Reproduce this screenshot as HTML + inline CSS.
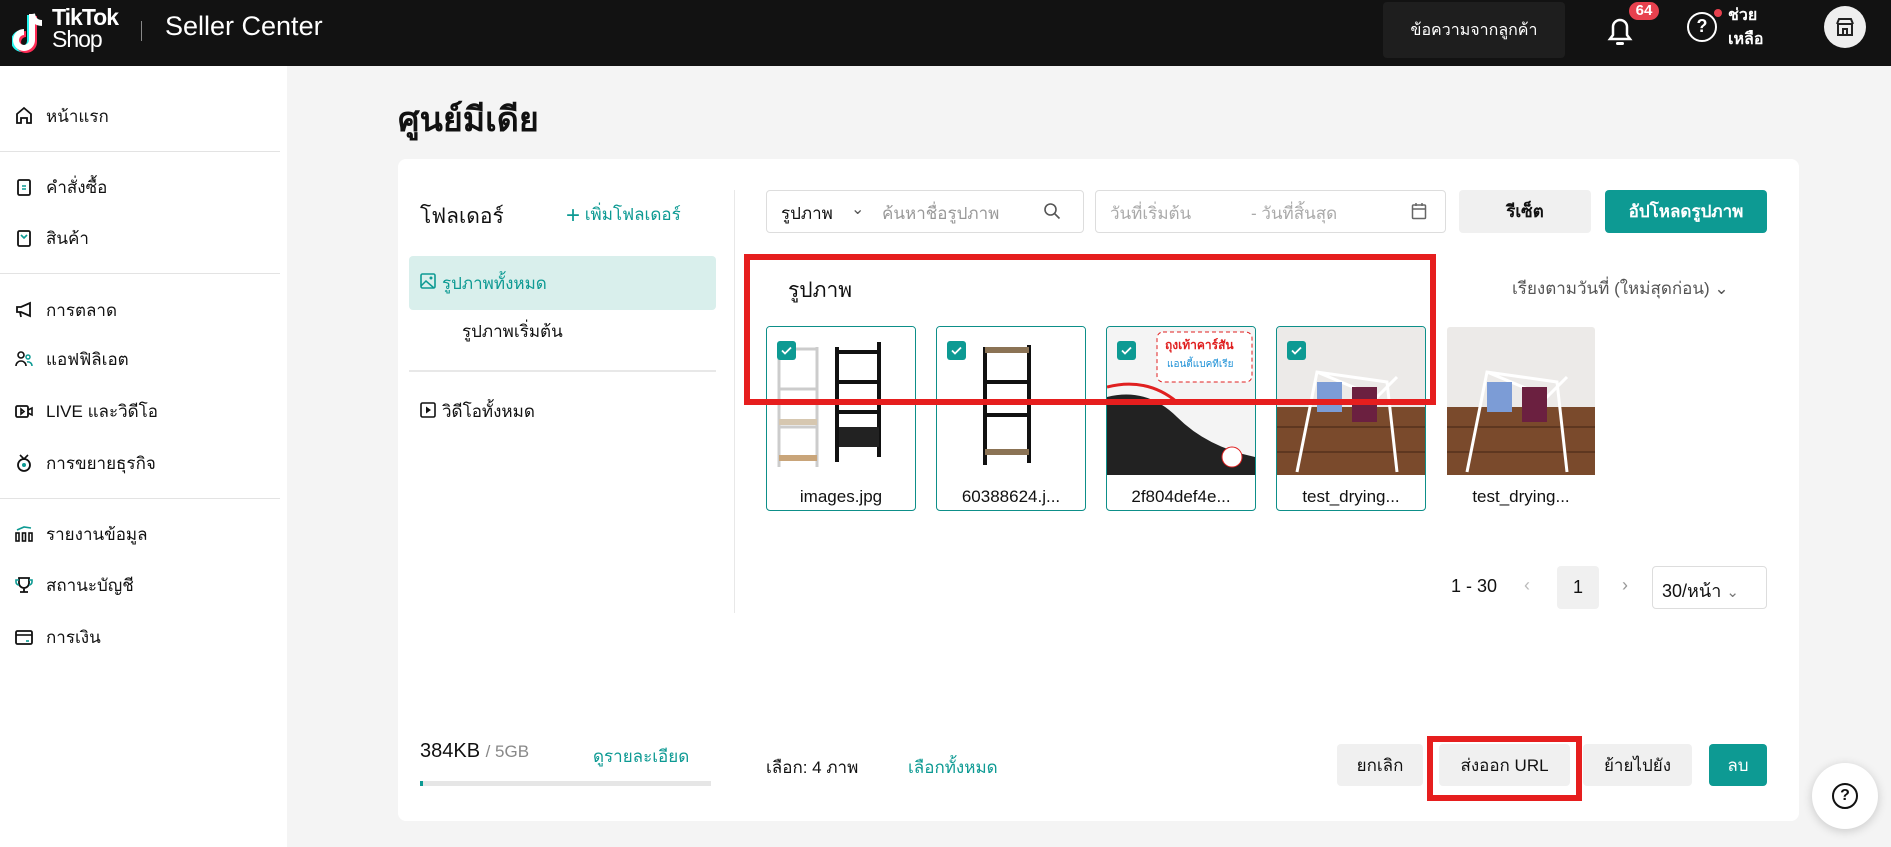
<!DOCTYPE html>
<html><head><meta charset="utf-8">
<style>
*{box-sizing:border-box;margin:0;padding:0}
body{width:1891px;height:847px;overflow:hidden;background:#f4f4f4;font-family:"Liberation Sans","DejaVu Sans",sans-serif;color:#111;position:relative}
.a{position:absolute}
.hdr{left:0;top:0;width:1891px;height:66px;background:#121212}
.side{left:0;top:66px;width:287px;height:781px;background:#fff}
.nav{position:absolute;left:14px;font-size:17px;display:flex;align-items:center;gap:12px;height:24px}
.nav svg{width:20px;height:20px}
.hr{position:absolute;left:0;width:280px;height:1px;background:#e3e3e3}
.card{left:398px;top:159px;width:1401px;height:662px;background:#fff;border-radius:8px}
.btn{position:absolute;display:flex;align-items:center;justify-content:center;border-radius:4px;font-size:17px}
.th{position:absolute;top:326px;width:150px;height:185px;border:1px solid #0d8f89;border-radius:4px;overflow:hidden;background:#fff}
.th .img{position:absolute;left:0;top:0;width:148px;height:148px}
.th .nm{position:absolute;left:0;top:160px;width:100%;text-align:center;font-size:17px}
.ck{position:absolute;left:10px;top:14px;width:19px;height:19px;background:#0d9a93;border-radius:3px}
.teal{color:#0d9a93}
</style></head><body>
<div class="a hdr"></div>
<svg class="a" style="left:12px;top:10px" width="40" height="46" viewBox="0 0 40 46">
<path d="M20 4v26a8 8 0 1 1-8-8" fill="none" stroke="#25f4ee" stroke-width="6" transform="translate(-2,1)"/>
<path d="M20 4v26a8 8 0 1 1-8-8" fill="none" stroke="#fe2c55" stroke-width="6" transform="translate(2,2)"/>
<path d="M20 4v26a8 8 0 1 1-8-8M20 4c1 6 5 9 10 9" fill="none" stroke="#fff" stroke-width="6"/>
</svg>
<div class="a" style="left:52px;top:6px;color:#fff;font-size:23px;font-weight:bold;line-height:22px;letter-spacing:-1px">TikTok<br><span style="font-weight:normal">Shop</span></div>
<div class="a" style="left:141px;top:21px;width:1px;height:20px;background:#888"></div>
<div class="a" style="left:165px;top:11px;color:#fff;font-size:27px;">Seller Center</div>
<div class="a btn" style="left:1383px;top:2px;width:182px;height:56px;background:#1e1e1e;color:#fff;font-size:16px">ข้อความจากลูกค้า</div>
<svg class="a" style="left:1606px;top:14px" width="28" height="34" viewBox="0 0 28 34"><path d="M4 25h20l-3-4V13a7 7 0 0 0-14 0v8z" fill="none" stroke="#fff" stroke-width="2.5"/><rect x="10" y="28" width="8" height="3" rx="1.5" fill="#fff"/></svg>
<div class="a" style="left:1627px;top:0;width:34px;height:22px;background:#e8414e;border:2px solid #121212;border-radius:11px;color:#fff;font-size:15px;font-weight:bold;text-align:center;line-height:18px">64</div>
<div class="a" style="left:1687px;top:12px;width:30px;height:30px;border:2.5px solid #fff;border-radius:50%;color:#fff;font-weight:bold;font-size:18px;text-align:center;line-height:25px">?</div>
<div class="a" style="left:1714px;top:9px;width:8px;height:8px;background:#e8414e;border-radius:50%"></div>
<div class="a" style="left:1728px;top:4px;color:#fff;font-size:16px;font-weight:bold;line-height:24px">ช่วย<br>เหลือ</div>
<div class="a" style="left:1824px;top:6px;width:42px;height:42px;background:#eee;border-radius:50%"></div>
<svg class="a" style="left:1834px;top:16px" width="22" height="22" viewBox="0 0 22 22"><path d="M3 8l2-5h12l2 5M4 8v11h14V8M9 19v-6h4v6M3 8h16" fill="none" stroke="#222" stroke-width="2"/></svg>

<div class="a side"></div>
<div class="nav" style="top:104px"><svg viewBox="0 0 20 20"><path d="M3 17V8l7-6 7 6v9h-4v-5H7v5z" fill="none" stroke="#111" stroke-width="1.8"/></svg>หน้าแรก</div>
<div class="hr" style="top:151px"></div>
<div class="nav" style="top:175px"><svg viewBox="0 0 20 20"><rect x="4" y="3" width="12" height="15" rx="1.5" fill="none" stroke="#111" stroke-width="1.8"/><path d="M8 9h4M8 12h4" stroke="#0d9a93" stroke-width="1.6"/></svg>คำสั่งซื้อ</div>
<div class="nav" style="top:226px"><svg viewBox="0 0 20 20"><rect x="4" y="3" width="12" height="15" rx="1.5" fill="none" stroke="#111" stroke-width="1.8"/><path d="M7 7l3 3 3-3" fill="none" stroke="#0d9a93" stroke-width="1.6"/></svg>สินค้า</div>
<div class="hr" style="top:273px"></div>
<div class="nav" style="top:298px"><svg viewBox="0 0 20 20"><path d="M3 7h4l9-4v13l-9-4H3zM6 12l1 5" fill="none" stroke="#111" stroke-width="1.8"/></svg>การตลาด</div>
<div class="nav" style="top:347px"><svg viewBox="0 0 20 20"><circle cx="7" cy="6" r="3" fill="none" stroke="#111" stroke-width="1.6"/><path d="M2 17a5 5 0 0 1 10 0" fill="none" stroke="#111" stroke-width="1.6"/><circle cx="14" cy="8" r="2" fill="none" stroke="#0d9a93" stroke-width="1.5"/><path d="M13 13a4 4 0 0 1 5 4" fill="none" stroke="#0d9a93" stroke-width="1.5"/></svg>แอฟฟิลิเอต</div>
<div class="nav" style="top:399px"><svg viewBox="0 0 20 20"><rect x="2" y="5" width="12" height="11" rx="1.5" fill="none" stroke="#111" stroke-width="1.8"/><path d="M14 9l4-2v7l-4-2M7 8v5l3-2.5z" fill="none" stroke="#111" stroke-width="1.6"/></svg>LIVE และวิดีโอ</div>
<div class="nav" style="top:451px"><svg viewBox="0 0 20 20"><circle cx="10" cy="12" r="6" fill="none" stroke="#111" stroke-width="1.8"/><circle cx="10" cy="12" r="2" fill="#0d9a93"/><path d="M6 2l4 4 4-4" fill="none" stroke="#111" stroke-width="1.6"/></svg>การขยายธุรกิจ</div>
<div class="hr" style="top:498px"></div>
<div class="nav" style="top:522px"><svg viewBox="0 0 20 20"><rect x="2" y="9" width="3" height="8" fill="none" stroke="#111" stroke-width="1.6"/><rect x="8.5" y="9" width="3" height="8" fill="none" stroke="#111" stroke-width="1.6"/><rect x="15" y="9" width="3" height="8" fill="none" stroke="#111" stroke-width="1.6"/><path d="M3 6l7-3 7 1" fill="none" stroke="#0d9a93" stroke-width="1.6"/></svg>รายงานข้อมูล</div>
<div class="nav" style="top:573px"><svg viewBox="0 0 20 20"><path d="M5 3h10v5a5 5 0 0 1-10 0zM10 13v4M6 17h8" fill="none" stroke="#111" stroke-width="1.8"/><path d="M5 5H2v2a3 3 0 0 0 3 3M15 5h3v2a3 3 0 0 1-3 3" fill="none" stroke="#0d9a93" stroke-width="1.6"/></svg>สถานะบัญชี</div>
<div class="nav" style="top:625px"><svg viewBox="0 0 20 20"><rect x="2" y="4" width="16" height="13" rx="1.5" fill="none" stroke="#111" stroke-width="1.8"/><path d="M2 8h16" stroke="#111" stroke-width="1.6"/><path d="M12 14h3" stroke="#0d9a93" stroke-width="1.6"/></svg>การเงิน</div>

<div class="a" style="left:398px;top:92px;font-size:34px;font-weight:bold">ศูนย์มีเดีย</div>
<div class="a card"></div>
<div class="a" style="left:420px;top:200px;font-size:21px">โฟลเดอร์</div>
<div class="a teal" style="left:566px;top:201px;font-size:17px"><span style="font-size:24px;vertical-align:-3px">+</span> เพิ่มโฟลเดอร์</div>
<div class="a" style="left:409px;top:256px;width:307px;height:54px;background:#d9efec;border-radius:4px"></div>
<svg class="a" style="left:420px;top:273px" width="16" height="16" viewBox="0 0 16 16"><rect x="1" y="1" width="14" height="14" rx="1.5" fill="none" stroke="#0d9a93" stroke-width="1.6"/><path d="M1 13l5-5 8 7" fill="none" stroke="#0d9a93" stroke-width="1.5"/><circle cx="11" cy="5" r="1.5" fill="#0d9a93"/></svg>
<div class="a teal" style="left:442px;top:270px;font-size:17px">รูปภาพทั้งหมด</div>
<div class="a" style="left:462px;top:318px;font-size:17px">รูปภาพเริ่มต้น</div>
<div class="a" style="left:409px;top:370px;width:307px;height:2px;background:#e8e8e8"></div>
<svg class="a" style="left:420px;top:402px" width="16" height="16" viewBox="0 0 16 16"><rect x="1" y="1" width="14" height="14" rx="1.5" fill="none" stroke="#111" stroke-width="1.6"/><path d="M6 4.5v7l5-3.5z" fill="#111"/></svg>
<div class="a" style="left:442px;top:398px;font-size:17px">วิดีโอทั้งหมด</div>
<div class="a" style="left:734px;top:190px;width:1px;height:423px;background:#e8e8e8"></div>
<div class="a" style="left:420px;top:740px;font-size:20px">384KB <span style="color:#888;font-size:17px">/ 5GB</span></div>
<div class="a teal" style="left:593px;top:743px;font-size:17px">ดูรายละเอียด</div>
<div class="a" style="left:420px;top:781px;width:291px;height:5px;background:#e6e6e6"></div>
<div class="a" style="left:420px;top:781px;width:3px;height:5px;background:#0d9a93"></div>

<div class="a" style="left:766px;top:190px;width:318px;height:43px;border:1px solid #ddd;border-radius:4px"></div>
<div class="a" style="left:781px;top:200px;font-size:17px">รูปภาพ</div>
<div class="a" style="left:851px;top:199px;font-size:16px;color:#555">&#8964;</div>
<div class="a" style="left:882px;top:200px;font-size:17px;color:#999">ค้นหาชื่อรูปภาพ</div>
<svg class="a" style="left:1043px;top:202px" width="18" height="18" viewBox="0 0 18 18"><circle cx="7.5" cy="7.5" r="5.5" fill="none" stroke="#555" stroke-width="1.6"/><path d="M11.5 11.5l5 5" stroke="#555" stroke-width="1.6"/></svg>
<div class="a" style="left:1095px;top:190px;width:351px;height:43px;border:1px solid #ddd;border-radius:4px"></div>
<div class="a" style="left:1110px;top:200px;font-size:17px;color:#aaa">วันที่เริ่มต้น</div>
<div class="a" style="left:1251px;top:200px;font-size:17px;color:#aaa">- วันที่สิ้นสุด</div>
<svg class="a" style="left:1411px;top:202px" width="16" height="18" viewBox="0 0 16 18"><rect x="1.5" y="3" width="13" height="13.5" rx="1" fill="none" stroke="#666" stroke-width="1.5"/><path d="M1.5 7h13M5 1v3M11 1v3" stroke="#666" stroke-width="1.5"/></svg>
<div class="btn" style="left:1459px;top:190px;width:132px;height:43px;background:#f0f0f0;font-weight:bold">รีเซ็ต</div>
<div class="btn" style="left:1605px;top:190px;width:162px;height:43px;background:#0d9a93;color:#fff;font-weight:bold">อัปโหลดรูปภาพ</div>

<div class="a" style="left:788px;top:274px;font-size:21px">รูปภาพ</div>
<div class="a" style="left:1512px;top:275px;font-size:17px;color:#555">เรียงตามวันที่ (ใหม่สุดก่อน) &#8964;</div>

<div class="th" style="left:766px"><svg class="img" viewBox="0 0 148 148"><rect width="148" height="148" fill="#fff"/>
<g stroke="#ccc" stroke-width="3" fill="none"><path d="M12 20v120M50 20v120M12 22h38M12 62h38M12 100h38"/></g><rect x="12" y="128" width="38" height="6" fill="#c9a57a"/><rect x="12" y="92" width="38" height="6" fill="#d6c7b0"/>
<g stroke="#111" stroke-width="4" fill="none"><path d="M70 20v115M112 15v115M70 25h42M70 55h42M70 85h42M70 115h42"/></g><path d="M72 100h40v20H72z" fill="#222"/></svg><div class="ck"><svg width="19" height="19" viewBox="0 0 19 19"><path d="M5 9.5l3 3 6-6" fill="none" stroke="#fff" stroke-width="1.8"/></svg></div><div class="nm">images.jpg</div></div>
<div class="th" style="left:936px"><svg class="img" viewBox="0 0 148 148"><rect width="148" height="148" fill="#fff"/>
<g stroke="#111" stroke-width="4" fill="none"><path d="M48 20v118M92 18v118M48 22h44M48 55h44M48 88h44M48 125h44"/></g><rect x="48" y="20" width="44" height="6" fill="#8b7355"/><rect x="48" y="122" width="44" height="6" fill="#8b7355"/></svg><div class="ck"><svg width="19" height="19" viewBox="0 0 19 19"><path d="M5 9.5l3 3 6-6" fill="none" stroke="#fff" stroke-width="1.8"/></svg></div><div class="nm">60388624.j...</div></div>
<div class="th" style="left:1106px"><svg class="img" viewBox="0 0 148 148"><rect width="148" height="148" fill="#f4f4f4"/>
<path d="M0 70q40 -10 70 20t78 40v18H0z" fill="#222"/><path d="M0 60q40 -10 70 15" fill="none" stroke="#e02020" stroke-width="3"/><rect x="50" y="5" width="95" height="50" rx="6" fill="#fff" stroke="#e02020" stroke-dasharray="4 3"/><text x="58" y="22" font-size="12" fill="#e02020" font-weight="bold">ถุงเท้าคาร์สัน</text><text x="60" y="40" font-size="10" fill="#1a8fd6">แอนตี้แบคทีเรีย</text><circle cx="125" cy="130" r="10" fill="#fff" stroke="#e02020"/></svg><div class="ck"><svg width="19" height="19" viewBox="0 0 19 19"><path d="M5 9.5l3 3 6-6" fill="none" stroke="#fff" stroke-width="1.8"/></svg></div><div class="nm">2f804def4e...</div></div>
<div class="th" style="left:1276px"><svg class="img" viewBox="0 0 148 148"><rect width="148" height="148" fill="#eceae8"/><rect y="80" width="148" height="68" fill="#7a4a2c"/><path d="M0 100h148M0 125h148" stroke="#5e3720" stroke-width="2"/>
<g stroke="#fff" stroke-width="3" fill="none"><path d="M20 145l20-100 70 10 10 90M40 45l60 25 20-20"/></g><rect x="40" y="55" width="25" height="30" fill="#7c9cd6"/><rect x="75" y="60" width="25" height="35" fill="#6b2040"/></svg><div class="ck"><svg width="19" height="19" viewBox="0 0 19 19"><path d="M5 9.5l3 3 6-6" fill="none" stroke="#fff" stroke-width="1.8"/></svg></div><div class="nm">test_drying...</div></div>
<div class="th" style="left:1446px;border-color:transparent"><svg class="img" viewBox="0 0 148 148"><rect width="148" height="148" fill="#eceae8"/><rect y="80" width="148" height="68" fill="#7a4a2c"/><path d="M0 100h148M0 125h148" stroke="#5e3720" stroke-width="2"/>
<g stroke="#fff" stroke-width="3" fill="none"><path d="M20 145l20-100 70 10 10 90M40 45l60 25 20-20"/></g><rect x="40" y="55" width="25" height="30" fill="#7c9cd6"/><rect x="75" y="60" width="25" height="35" fill="#6b2040"/></svg><div class="nm">test_drying...</div></div>

<div class="a" style="left:744px;top:254px;width:692px;height:151px;border:6px solid #e61e1e"></div>

<div class="a" style="left:1451px;top:576px;font-size:18px">1 - 30</div>
<div class="a" style="left:1524px;top:575px;font-size:18px;color:#bbb">&#8249;</div>
<div class="btn" style="left:1557px;top:566px;width:42px;height:43px;background:#f0f0f0;font-size:18px">1</div>
<div class="a" style="left:1622px;top:575px;font-size:18px;color:#999">&#8250;</div>
<div class="a" style="left:1652px;top:566px;width:115px;height:43px;border:1px solid #ddd;border-radius:4px"></div>
<div class="a" style="left:1662px;top:576px;font-size:18px">30/หน้า <span style="color:#777;font-size:15px">&#8964;</span></div>

<div class="a" style="left:766px;top:754px;font-size:17px">เลือก: 4 ภาพ</div>
<div class="a teal" style="left:908px;top:754px;font-size:17px">เลือกทั้งหมด</div>
<div class="btn" style="left:1337px;top:744px;width:86px;height:42px;background:#f0f0f0">ยกเลิก</div>
<div class="btn" style="left:1439px;top:744px;width:131px;height:42px;background:#f0f0f0">ส่งออก URL</div>
<div class="btn" style="left:1583px;top:744px;width:109px;height:42px;background:#f0f0f0">ย้ายไปยัง</div>
<div class="btn" style="left:1709px;top:744px;width:58px;height:42px;background:#0d9a93;color:#fff">ลบ</div>
<div class="a" style="left:1427px;top:736px;width:155px;height:65px;border:6px solid #e61e1e"></div>

<div class="a" style="left:1812px;top:763px;width:66px;height:66px;background:#fff;border-radius:50%;box-shadow:0 2px 10px rgba(0,0,0,.18)"></div>
<div class="a" style="left:1832px;top:783px;width:26px;height:26px;border:2px solid #111;border-radius:50%;text-align:center;font-size:16px;font-weight:bold;line-height:22px">?</div>
</body></html>
